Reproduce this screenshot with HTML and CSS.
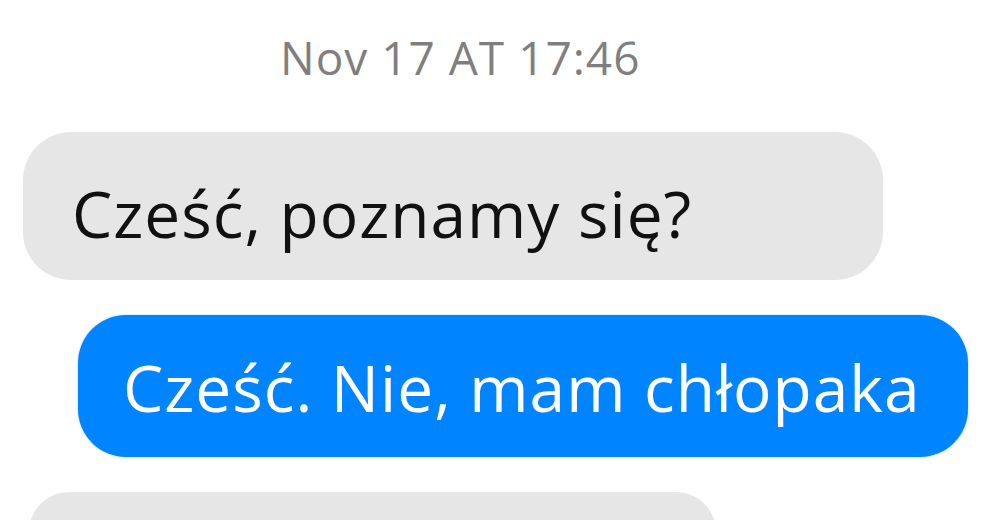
FILE: index.html
```html
<!DOCTYPE html>
<html>
<head>
<meta charset="utf-8">
<link rel="stylesheet" href="styles.css">
</head>
<body>
<div class="chat">
  <div class="stamp">Nov 17 AT 17:46</div>
  <div class="row in"><div class="bubble gray">Cześć, poznamy się?</div></div>
  <div class="row out"><div class="bubble blue">Cześć. Nie, mam chłopaka</div></div>
  <div class="row in third"><div class="bubble gray empty"></div></div>
</div>
</body>
</html>
```
FILE: styles.css
```css
html, body {
  margin: 0;
  padding: 0;
  background: #ffffff;
  overflow: hidden;
}
.chat {
  width: 990px;
  height: 520px;
  overflow: hidden;
  display: flex;
  flex-direction: column;
  font-family: "Open Sans", "Noto Sans", sans-serif;
}
.stamp {
  align-self: flex-start;
  margin: 25px 0 0 280px;
  font-size: 46px;
  line-height: 64px;
  letter-spacing: 1px;
  color: #7f7f7f;
}
.row {
  display: flex;
  flex-shrink: 0;
}
.row.in {
  margin-top: 43px;
  padding-left: 23px;
}
.row.out {
  margin-top: 35px;
  padding-left: 78px;
}
.row.third {
  margin-top: 35px;
  padding-left: 29px;
}
.bubble {
  font-size: 64px;
  line-height: 1;
  letter-spacing: 1px;
  border-radius: 48px;
  box-sizing: border-box;
  white-space: nowrap;
}
.gray {
  background: #e6e6e6;
  color: #111111;
  width: 860px;
  height: 148px;
  padding: 50px 0 0 49px;
}
.blue {
  background: #0084ff;
  color: #ffffff;
  width: 890px;
  height: 142px;
  padding: 41px 0 0 45px;
  box-shadow: 0 0 2px #8ecbff;
}
.gray.empty {
  width: 687px;
  height: 80px;
  padding: 0;
  border-radius: 40px;
}
```
